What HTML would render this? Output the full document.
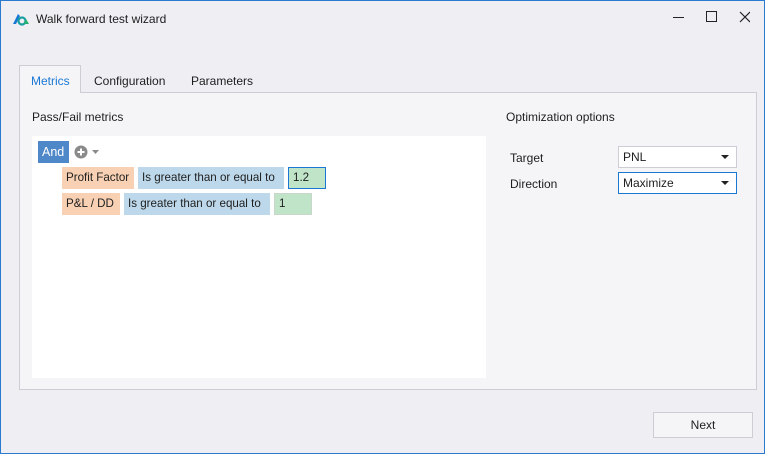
<!DOCTYPE html>
<html><head><style>
*{box-sizing:border-box;margin:0;padding:0}
body{width:765px;height:454px;overflow:hidden;background:#eeeef3;font-family:"Liberation Sans",sans-serif;font-size:12px;color:#1e1e1e;position:relative}
.win{position:absolute;left:0;top:0;width:765px;height:454px;border:1px solid #2a7bd0;}
.a{position:absolute;white-space:nowrap}
.chip{position:absolute;height:22px;line-height:22px;padding:0 4px;font-size:11.6px;white-space:nowrap;overflow:hidden}
.or{background:#f8d1b4}.bl{background:#bdd8ea}.gr{background:#bfe4c8}
</style></head><body>
<div class="win"></div>
<svg class="a" style="left:12px;top:12px" width="18" height="14" viewBox="0 0 18 14"><path d="M1 12 L6 2 L8 4 L4 12Z" fill="#1a78d4"/><circle cx="10" cy="9" r="3.5" fill="none" stroke="#1aa0a0" stroke-width="2.2"/><path d="M12 12 L17 12 L14 7Z" fill="#23b06e"/></svg>
<div class="a" style="left:36px;top:12px;font-size:12px">Walk forward test wizard</div>
<svg class="a" style="left:670px;top:10px" width="80" height="14"><line x1="3" y1="7.5" x2="14" y2="7.5" stroke="#222"/><rect x="36.5" y="1.5" width="10" height="10" fill="none" stroke="#222"/><path d="M70 2 L80 12 M80 2 L70 12" stroke="#222" stroke-width="1.2"/></svg>
<div class="a" style="left:19px;top:92px;width:738px;height:298px;background:#f5f5f8;border:1px solid #cdcdd6"></div>
<div class="a" style="left:19px;top:65px;width:62px;height:28px;background:#f5f5f8;border:1px solid #cdcdd6;border-bottom:none"></div>
<div class="a" style="left:31px;top:74px;color:#1a78d4">Metrics</div>
<div class="a" style="left:94px;top:74px">Configuration</div>
<div class="a" style="left:191px;top:74px">Parameters</div>
<div class="a" style="left:32px;top:110px">Pass/Fail metrics</div>
<div class="a" style="left:506px;top:110px">Optimization options</div>
<div class="a" style="left:32px;top:136px;width:454px;height:242px;background:#fff"></div>
<div class="chip" style="left:38px;top:141px;width:31px;background:#4f88c8;color:#fff;font-size:12.5px">And</div>
<svg class="a" style="left:74px;top:145px" width="28" height="14"><circle cx="7" cy="7" r="6.5" fill="#8a8a8a"/><path d="M7 3.5v7M3.5 7h7" stroke="#fff" stroke-width="2"/><path d="M18 5h7l-3.5 4z" fill="#8a8a8a"/></svg>
<div class="chip or" style="left:62px;top:167px;width:72px">Profit Factor</div>
<div class="chip bl" style="left:138px;top:167px;width:146px">Is greater than or equal to</div>
<div class="chip gr" style="left:288px;top:167px;width:38px;border:1px solid #1a78d4;line-height:20px">1.2</div>
<div class="chip or" style="left:62px;top:193px;width:58px">P&amp;L / DD</div>
<div class="chip bl" style="left:124px;top:193px;width:146px">Is greater than or equal to</div>
<div class="chip gr" style="left:274px;top:193px;width:38px;border:1px solid #c8d6cc;line-height:20px">1</div>
<div class="a" style="left:510px;top:151px">Target</div>
<div class="a" style="left:510px;top:177px">Direction</div>
<div class="a" style="left:618px;top:146px;width:119px;height:22px;background:#fff;border:1px solid #cdcdd6;padding:3px 4px">PNL</div>
<div class="a" style="left:618px;top:172px;width:119px;height:22px;background:#fff;border:1px solid #1a78d4;padding:3px 4px">Maximize</div>
<svg class="a" style="left:720px;top:154px" width="10" height="36"><path d="M1 1h8l-4 4z M1 27h8l-4 4z" fill="#222"/></svg>
<div class="a" style="left:653px;top:412px;width:100px;height:26px;background:#f5f5f8;border:1px solid #cdcdd6;text-align:center;line-height:24px">Next</div>
</body></html>
